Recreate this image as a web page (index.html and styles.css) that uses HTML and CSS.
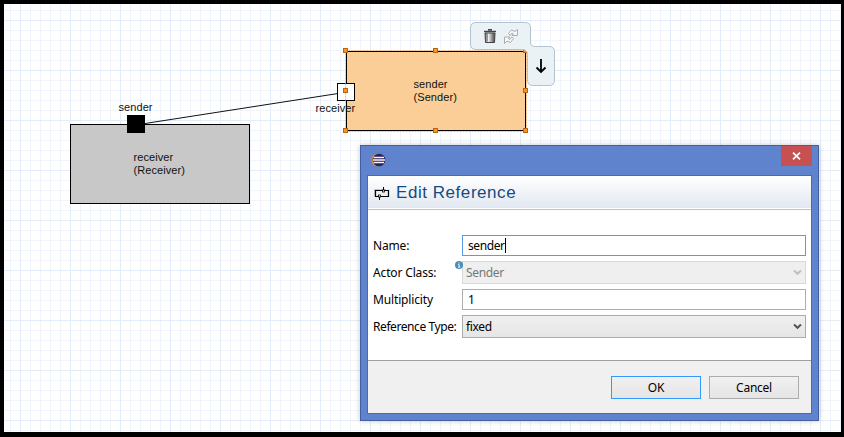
FILE: index.html
```html
<!DOCTYPE html>
<html lang="en">
<head>
<meta charset="utf-8">
<title>Edit Reference</title>
<link rel="stylesheet" href="styles.css">
</head>
<body>
<main class="canvas">
  <svg class="wires" width="844" height="437" aria-hidden="true"><path d="M145 123.500L338 93.500" stroke="#111" fill="none"/></svg>

  <div class="node receiver-node"><p class="label">receiver<br>(Receiver)</p></div>
  <span class="port port-filled"></span>
  <span class="port-name sender-name">sender</span>

  <div class="node sender-node"><p class="label">sender<br>(Sender)</p></div>
  <span class="port port-open"></span>
  <span class="port-name receiver-name">receiver</span>
  <svg class="wires" width="844" height="437" aria-hidden="true">
    <rect x="345.500" y="50.500" width="181" height="81" fill="none" stroke="#f2b878" stroke-dasharray="2 1"/>
    <g fill="#fb9226" stroke="#b8650c">
      <rect x="343.500" y="48.500" width="4" height="4"/><rect x="433.500" y="48.500" width="4" height="4"/><rect x="523.500" y="48.500" width="4" height="4"/>
      <rect x="343.500" y="88.500" width="4" height="4"/><rect x="523.500" y="88.500" width="4" height="4"/>
      <rect x="343.500" y="128.500" width="4" height="4"/><rect x="433.500" y="128.500" width="4" height="4"/><rect x="523.500" y="128.500" width="4" height="4"/>
    </g>
  </svg>

  <svg class="context-pad" width="88" height="66" viewBox="468 20 88 66" aria-hidden="true">
    <defs>
      <linearGradient id="can"><stop offset="0" stop-color="#555"/><stop offset=".35" stop-color="#eee"/><stop offset="1" stop-color="#444"/></linearGradient>
    </defs>
    <path d="M476 22.500H525Q530.500 22.500 530.500 28V42Q530.500 46.500 535 46.500H549Q554.500 46.500 554.500 52V80Q554.500 85.500 549 85.500H533Q527.500 85.500 527.500 80V55Q527.500 49.500 522 49.500H476Q470.500 49.500 470.500 44V28Q470.500 22.500 476 22.500Z" fill="#eaf2f6" stroke="#b3c4d0"/>
    <path d="M485 33H495L494.500 42.500H485.500Z" fill="url(#can)" stroke="#444"/>
    <path d="M484 31.500H496M488 29.800H492" stroke="#444" stroke-width="1.600"/>
    <path d="M487.500 34V41M492.500 34V41" stroke="#777" stroke-width=".6"/>
    <g fill="#f8f8f8" stroke="#a5a5a5" stroke-width=".9" stroke-linejoin="round">
      <path d="M508.500 33.500L511.500 30L515 31.500L517.500 29.500V35.500H512L513.500 33.800L512 33L510 35.500Z"/>
      <path d="M513.500 38.500L510.500 42.500L507 41L504.500 43.500V37H510L508.500 38.800L510 39.500L512 37Z"/>
    </g>
    <path d="M541 59V72M536.500 67.500L541 72L545.500 67.500" fill="none" stroke="#000" stroke-width="1.800"/>
  </svg>

  <section class="dialog">
    <header class="titlebar">
      <svg class="eclipse" width="15" height="14" viewBox="0 0 15 14"><circle cx="6.600" cy="7" r="6.300" fill="#e38b2a"/><circle cx="8" cy="7" r="6.300" fill="#2b2255"/><path d="M2.500 4.500H13M2 7H14M2.500 9.500H13" stroke="#f4f2fa" stroke-width="1.300"/></svg>
      <button class="close" aria-label="Close"><svg width="9" height="8" viewBox="0 0 9 8"><path d="M1 .7L8 7.300M8 .7L1 7.300" stroke="#fff" stroke-width="1.800"/></svg></button>
    </header>
    <div class="content">
      <div class="heading">
        <svg width="16" height="16" viewBox="0 0 16 16"><path d="M0 4H12V11H0Z" fill="#c5c5c5"/><path d="M1.500 5.500H14.500V11.500H1.500Z" fill="#eee" stroke="#000" stroke-width="1.200"/><path d="M9.500 2V6M5.500 11V15" stroke="#000"/><rect x="8.500" y="5" width="2" height="2" fill="#fff" stroke="#000" stroke-width=".8"/><rect x="4.500" y="10" width="2" height="2" fill="#fff" stroke="#000" stroke-width=".8"/></svg>
        <h1>Edit Reference</h1>
      </div>
      <form class="fields">
        <span class="name">Name:</span><div class="field focused"><span>sender</span><i class="caret"></i></div>
        <span class="name">Actor Class:</span><div class="field combo disabled"><svg class="info" width="8" height="8" viewBox="0 0 8 8"><circle cx="4" cy="4" r="4" fill="#4b8ebc"/><path d="M4 1.500V2.500M3 3.700H4.200V6M3 6.200H5.300" fill="none" stroke="#fff" stroke-width=".9"/></svg><span>Sender</span><svg class="chevron" width="9" height="7" viewBox="0 0 9 7"><path d="M1 1.500L4.500 4.800L8 1.500" fill="none" stroke="currentColor" stroke-width="2"/></svg></div>
        <span class="name">Multiplicity</span><div class="field"><span>1</span></div>
        <span class="name reference-type">Reference Type:</span><div class="field combo"><span>fixed</span><svg class="chevron" width="9" height="7" viewBox="0 0 9 7"><path d="M1 1.500L4.500 4.800L8 1.500" fill="none" stroke="currentColor" stroke-width="2"/></svg></div>
      </form>
      <footer class="actions"><button class="default">OK</button><button>Cancel</button></footer>
    </div>
  </section>
</main>
</body>
</html>
```
FILE: styles.css
```css
* { box-sizing: border-box; }
body { margin: 0; overflow: hidden; }
.canvas {
  position: relative;
  width: 844px;
  height: 437px;
  background:
    linear-gradient(90deg, #e3edf8 1px, transparent 1px) 20px 20px / 50px 50px,
    linear-gradient(#e3edf8 1px, transparent 1px) 20px 20px / 50px 50px,
    linear-gradient(90deg, #f0f4fc 1px, transparent 1px) 0 0 / 10px 10px,
    linear-gradient(#f0f4fc 1px, transparent 1px) 0 0 / 10px 10px,
    #fff;
  font-family: "Liberation Sans", Arial, sans-serif;
}
.canvas::after {
  content: "";
  position: absolute;
  inset: 0;
  border: solid #000;
  border-width: 4px 3px 5px 4px;
  pointer-events: none;
}
.wires { position: absolute; left: 0; top: 0; }
.node { position: absolute; width: 180px; height: 80px; border: 1px solid #000; color: #111; }
.label { margin: 0; font-size: 11px; line-height: 13px; }
.receiver-node { left: 70px; top: 124px; background: #c8c8c8; padding: 26px 0 0 62.5px; }
.sender-node { left: 346px; top: 51px; background: #fbce98; padding: 26px 0 0 66.5px; }
.port { position: absolute; width: 18px; height: 18px; border: 1px solid #000; }
.port-filled { left: 127px; top: 115px; background: #000; }
.port-open { left: 337px; top: 83px; background: #fff; }
.port-name { position: absolute; font-size: 11px; line-height: 13px; color: #111; }
.label, .port-name { letter-spacing: .08px; }
.sender-name { left: 118.5px; top: 101px; }
.receiver-name { left: 315.5px; top: 102px; }
.context-pad { position: absolute; left: 468px; top: 20px; }

.dialog {
  position: absolute;
  left: 360px;
  top: 145px;
  width: 459px;
  height: 276px;
  padding: 0 6px 6px;
  display: flex;
  flex-direction: column;
  border: 1px solid #425fa2;
  background: #5f83cd;
  box-shadow: 0 0 5px rgba(60, 70, 100, .3);
  font-family: "Noto Sans", "Open Sans", sans-serif;
  font-size: 12px;
  letter-spacing: -.15px;
  color: #000;
}
.titlebar { height: 29px; display: flex; justify-content: space-between; }
.eclipse { margin: 7px 0 0 4px; }
.close { width: 31px; height: 20px; padding: 0; border: 0; background: #c75050; display: grid; place-items: center; }
.content { flex: 1; display: flex; flex-direction: column; border: 1px solid #4b69ad; background: #fff; }
.heading {
  height: 34px;
  padding: 0 6px;
  display: flex;
  align-items: center;
  gap: 6px;
  border-bottom: 1px solid #b5c5d6;
  background: linear-gradient(#fff, #e2e8f1 96%, #fff 97%);
}
.heading h1 { margin: 0; font: 17px/20px "Liberation Sans", Arial, sans-serif; letter-spacing: .55px; color: #164b80; }
.fields {
  height: 150px;
  padding: 25px 5px 0;
  display: grid;
  grid-template-columns: 83px 344px;
  grid-template-rows: 21px 23px 21px 23px;
  gap: 5px 6px;
  align-content: start;
}
.name { align-self: center; white-space: nowrap; line-height: 16px; }
.reference-type { letter-spacing: -.42px; }
.field { position: relative; display: flex; align-items: center; padding: 0 5px; border: 1px solid #abadb3; background: #fff; line-height: 16px; letter-spacing: -.4px; }
.focused { border-color: #569de5; }
.caret { width: 1px; height: 15px; background: #000; }
.combo { padding: 0 3px; justify-content: space-between; border-color: #acacac; background: linear-gradient(#f0f0f0, #e5e5e5); letter-spacing: -.35px; }
.combo .chevron { color: #555; }
.disabled { border-color: #d9d9d9; background: #efefef; color: #777; }
.disabled .chevron { color: #bfbfbf; }
.info { position: absolute; left: -8px; top: -1px; }
.actions { flex: 1; display: flex; justify-content: flex-end; gap: 8px; padding: 15px 12px 0; border-top: 1px solid #a0a0a0; background: #f0f0f0; }
.actions button { width: 90px; height: 23px; padding: 0; border: 1px solid #acacac; background: linear-gradient(#f0f0f0, #e5e5e5); font: inherit; line-height: 16px; letter-spacing: -.25px; }
.actions .default { border-color: #3399ff; }
```
